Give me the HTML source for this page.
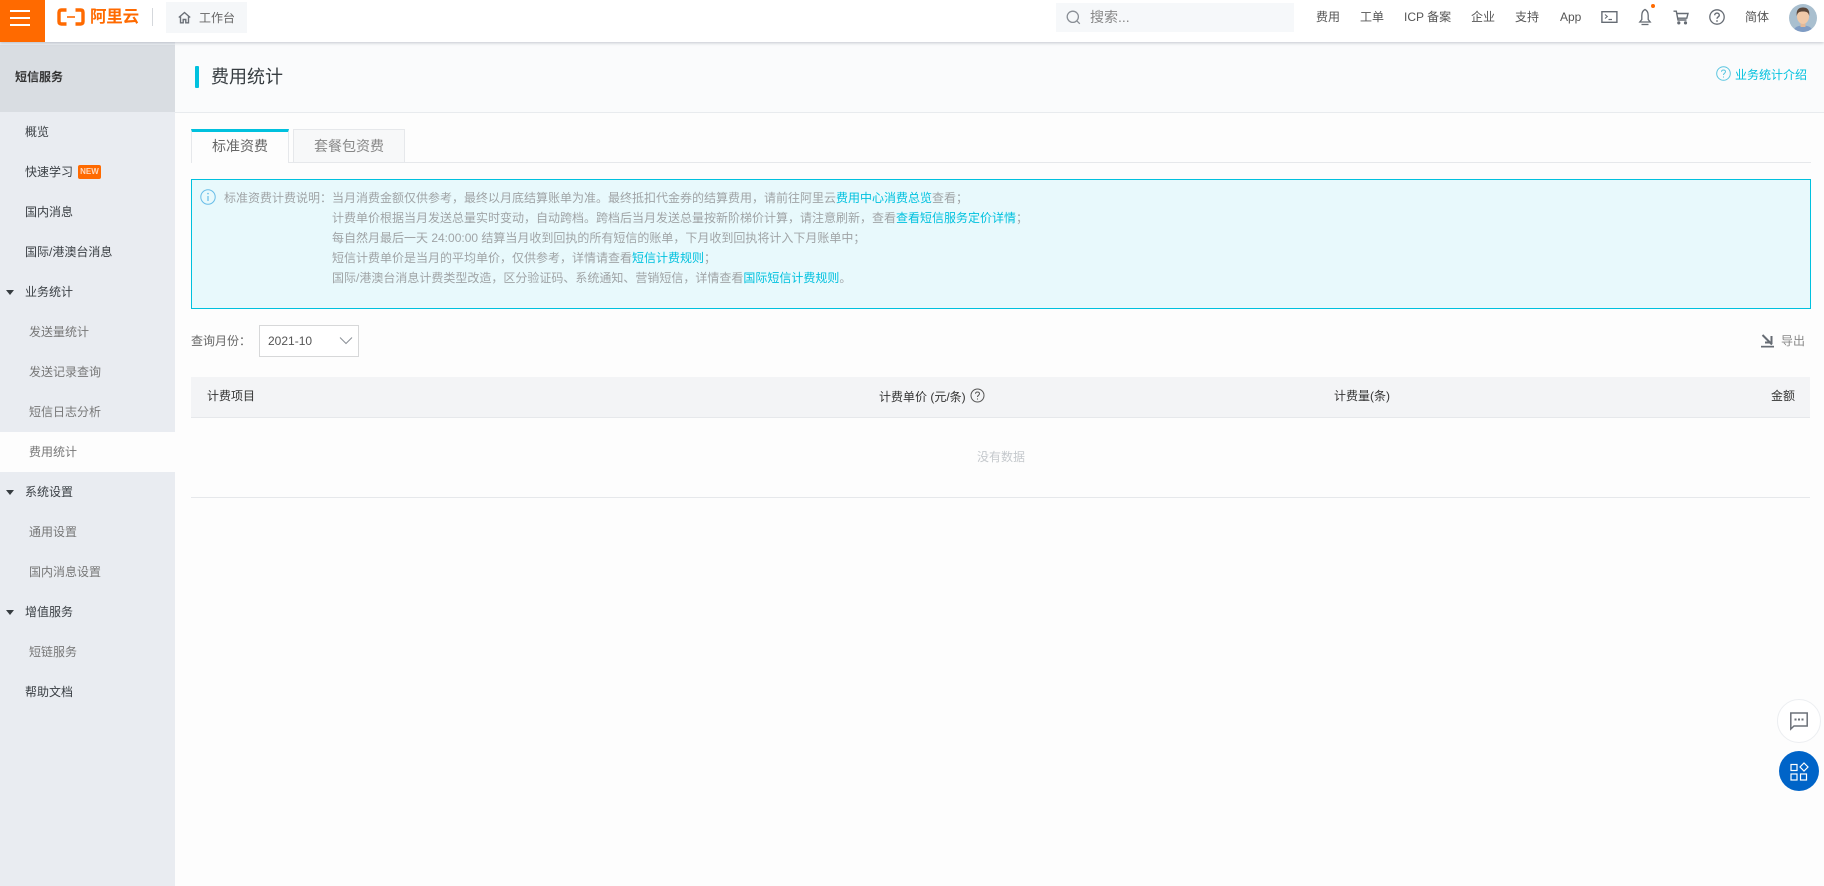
<!DOCTYPE html>
<html lang="zh-CN">
<head>
<meta charset="utf-8">
<title>费用统计</title>
<style>
*{margin:0;padding:0;box-sizing:border-box}
html,body{width:1824px;height:886px;overflow:hidden;background:#fdfdfd}
body{position:relative;font-family:"Liberation Sans","Noto Sans CJK SC",sans-serif;font-size:12px;color:#333}
.a{position:absolute;white-space:nowrap}
.t{position:absolute;white-space:nowrap;line-height:20px;height:20px}
svg{position:absolute;display:block}
#top{position:absolute;left:0;top:0;width:1824px;height:42px;background:#fff;box-shadow:0 1px 3px rgba(60,70,90,.28);z-index:5}
#side{position:absolute;left:0;top:42px;width:175px;height:844px;background:#e9ecf1}
#sidehead{position:absolute;left:0;top:3px;width:175px;height:67px;background:#d9dde2}
.s1{left:25px;color:#3a3f44}
.s2{left:29px;color:#777}
.tri{position:absolute;left:6px;width:0;height:0;border-left:4px solid transparent;border-right:4px solid transparent;border-top:5px solid #373d41}
.nav{top:7px;color:#555}
.al{color:#a0a4a6}
.al b{font-weight:normal;color:#00c1de}
</style>
</head>
<body>

<div id="side">
  <div id="sidehead"></div>
  <div class="a" style="left:0;top:390px;width:175px;height:40px;background:#fdfdfd"></div>
</div>

<div class="t" style="left:15px;top:67px;font-weight:bold;color:#333">短信服务</div>
<div class="t s1" style="top:122px">概览</div>
<div class="t s1" style="top:162px">快速学习</div>
<div class="a" style="left:78px;top:165px;width:23px;height:14px;background:#ff6a00;border-radius:2px;color:#ffd9bd;font-size:8px;line-height:14px;text-align:center;font-weight:bold">NEW</div>
<div class="t s1" style="top:202px">国内消息</div>
<div class="t s1" style="top:242px">国际/港澳台消息</div>
<div class="tri" style="top:290px"></div>
<div class="t s1" style="top:282px">业务统计</div>
<div class="t s2" style="top:322px">发送量统计</div>
<div class="t s2" style="top:362px">发送记录查询</div>
<div class="t s2" style="top:402px">短信日志分析</div>
<div class="t s2" style="top:442px">费用统计</div>
<div class="tri" style="top:490px"></div>
<div class="t s1" style="top:482px">系统设置</div>
<div class="t s2" style="top:522px">通用设置</div>
<div class="t s2" style="top:562px">国内消息设置</div>
<div class="tri" style="top:610px"></div>
<div class="t s1" style="top:602px">增值服务</div>
<div class="t s2" style="top:642px">短链服务</div>
<div class="t s1" style="top:682px">帮助文档</div>

<div id="top">
  <div class="a" style="left:0;top:0;width:45px;height:42px;background:#ff6a00"></div>
  <div class="a" style="left:10px;top:10px;width:20px;height:2px;background:#fff"></div>
  <div class="a" style="left:10px;top:17px;width:20px;height:2px;background:#fff"></div>
  <div class="a" style="left:10px;top:24px;width:20px;height:2px;background:#fff"></div>

  <svg style="left:57px;top:8px" width="28" height="18" viewBox="0 0 28 18" fill="none" stroke="#ff6a00">
    <path d="M9.500 2H4.500Q2 2 2 4.500V13.500Q2 16 4.500 16H9.500" stroke-width="3.400"/>
    <path d="M18.500 2H23.500Q26 2 26 4.500V13.500Q26 16 23.500 16H18.500" stroke-width="3.400"/>
    <path d="M10 9H18" stroke-width="1.600"/>
  </svg>
  <div class="a" style="left:90px;top:5px;font-size:16.500px;line-height:24px;color:#ff6a00;font-weight:bold;letter-spacing:-.2px">阿里云</div>
  <div class="a" style="left:152px;top:8px;width:1px;height:18px;background:#d5d8dc"></div>

  <div class="a" style="left:166px;top:2px;width:81px;height:31px;background:#f5f7f9"></div>
  <svg style="left:178px;top:11px" width="13" height="13" viewBox="0 0 13 13" fill="none" stroke="#6b7078" stroke-width="1.400">
    <path d="M.8 6.500 6.500 1.500 12.200 6.500"/>
    <path d="M2.500 5.500V11.800H5.200V8.500H7.800V11.800H10.500V5.500"/>
  </svg>
  <div class="t" style="left:199px;top:8px;color:#666">工作台</div>

  <div class="a" style="left:1056px;top:3px;width:238px;height:29px;background:#f6f8fa"></div>
  <svg style="left:1066px;top:10px" width="15" height="15" viewBox="0 0 15 15" fill="none" stroke="#8a8f96" stroke-width="1.300">
    <circle cx="6.800" cy="6.800" r="5.600"/><path d="M10.800 10.800 13.800 13.800"/>
  </svg>
  <div class="t" style="left:1090px;top:7px;font-size:14px;color:#888">搜索...</div>

  <div class="t nav" style="left:1316px">费用</div>
  <div class="t nav" style="left:1360px">工单</div>
  <div class="t nav" style="left:1404px">ICP 备案</div>
  <div class="t nav" style="left:1471px">企业</div>
  <div class="t nav" style="left:1515px">支持</div>
  <div class="t nav" style="left:1560px">App</div>

  <svg style="left:1601px;top:10px" width="17" height="14" viewBox="0 0 17 14" fill="none" stroke="#666c74" stroke-width="1.400">
    <rect x=".9" y="1.700" width="15" height="10.600"/>
    <path d="M4 4.500 6.300 6.500 4 8.500" stroke-width="1.100"/>
    <path d="M7.500 9.500H11" stroke-width="1.200"/>
  </svg>
  <svg style="left:1638px;top:8px" width="14" height="18" viewBox="0 0 14 18" fill="none" stroke="#666c74" stroke-width="1.300">
    <path d="M7 1.500C4.300 2.800 3.800 5 3.800 7.500V11.500L1.800 14H12.200L10.200 11.500V7.500C10.200 5 9.700 2.800 7 1.500Z"/>
    <path d="M3.500 16.500H10.500"/>
  </svg>
  <div class="a" style="left:1651px;top:4px;width:4px;height:4px;border-radius:50%;background:#ff6a00"></div>
  <svg style="left:1673px;top:10px" width="16" height="15" viewBox="0 0 16 15" fill="none" stroke="#666c74" stroke-width="1.400">
    <path d="M.5 1.200H3.300L5 10H13.500"/>
    <path d="M3.800 3.500H15L13.800 8.200H4.800"/>
    <circle cx="5.800" cy="12.900" r=".9" fill="#666c74"/><circle cx="12.500" cy="12.900" r=".9" fill="#666c74"/>
  </svg>
  <svg style="left:1709px;top:9px" width="16" height="16" viewBox="0 0 16 16" fill="none" stroke="#666c74" stroke-width="1.300">
    <circle cx="8" cy="8" r="7.200"/>
    <path d="M5.700 6.200C5.700 3.400 10.300 3.400 10.300 6.200 10.300 7.800 8 7.800 8 9.800" stroke-width="1.400"/>
    <circle cx="8" cy="12" r=".9" fill="#666c74" stroke="none"/>
  </svg>
  <div class="t nav" style="left:1745px">简体</div>

  <svg style="left:1789px;top:4px" width="28" height="28" viewBox="0 0 28 28">
    <defs><clipPath id="av"><circle cx="14" cy="14" r="14"/></clipPath></defs>
    <g clip-path="url(#av)">
      <rect width="28" height="28" fill="#a9bfcf"/>
      <path d="M4 28C5 23 9 21.500 14 21.500S23 23 24 28Z" fill="#7f9cc4"/>
      <rect x="11.500" y="17" width="5" height="6" fill="#e3b998"/>
      <ellipse cx="14" cy="12.500" rx="6" ry="7.500" fill="#f0c9a8"/>
      <path d="M7.800 12C7 5.500 10 3.500 14 3.500S21 5.500 20.200 12C19.500 8.500 18 7.500 14 7.500S8.500 8.500 7.800 12Z" fill="#5a4639"/>
    </g>
  </svg>
</div>

<div class="a" style="left:175px;top:42px;width:1649px;height:70px;background:#fafbfc"></div>
<div class="a" style="left:175px;top:112px;width:1649px;height:1px;background:#e8ebee"></div>
<div class="a" style="left:195px;top:66px;width:4px;height:22px;background:#00c1de;border-radius:1px"></div>
<div class="a" style="left:211px;top:63px;font-size:18px;line-height:28px;color:#373d41">费用统计</div>

<svg style="left:1716px;top:66px" width="15" height="15" viewBox="0 0 15 15" fill="none" stroke="#5cc6e0" stroke-width="1">
  <circle cx="7.500" cy="7.500" r="6.800"/>
  <path d="M5.500 5.800C5.500 3.400 9.500 3.400 9.500 5.800 9.500 7.200 7.500 7.200 7.500 9"/>
  <circle cx="7.500" cy="11" r=".6" fill="#5cc6e0" stroke="none"/>
</svg>
<div class="t" style="left:1735px;top:65px;color:#00c1de">业务统计介绍</div>

<div class="a" style="left:191px;top:162px;width:1620px;height:1px;background:#e6e8eb"></div>
<div class="a" style="left:191px;top:129px;width:98px;height:34px;background:#fdfdfd;border-top:3px solid #00c1de;border-left:1px solid #e6e8eb;border-right:1px solid #e6e8eb"></div>
<div class="a" style="left:191px;top:133px;width:98px;text-align:center;font-size:14px;line-height:26px;color:#666">标准资费</div>
<div class="a" style="left:293px;top:129px;width:112px;height:34px;background:#f7f8f9;border:1px solid #e6e8eb"></div>
<div class="a" style="left:293px;top:133px;width:112px;text-align:center;font-size:14px;line-height:26px;color:#888">套餐包资费</div>

<div class="a" style="left:191px;top:179px;width:1620px;height:130px;background:#e8f9fc;border:1px solid #00c1de"></div>
<svg style="left:200px;top:189px" width="16" height="16" viewBox="0 0 16 16" fill="none" stroke="#67bde8" stroke-width="1">
  <circle cx="8" cy="8" r="7.200"/>
  <path d="M8 7V12" stroke-width="1.200"/><circle cx="8" cy="4.600" r=".8" fill="#67bde8" stroke="none"/>
</svg>
<div class="t al" style="left:224px;top:188px">标准资费计费说明：</div>
<div class="t al" style="left:332px;top:188px">当月消费金额仅供参考，最终以月底结算账单为准。最终抵扣代金券的结算费用，请前往阿里云<b>费用中心消费总览</b>查看；</div>
<div class="t al" style="left:332px;top:208px">计费单价根据当月发送总量实时变动，自动跨档。跨档后当月发送总量按新阶梯价计算，请注意刷新，查看<b>查看短信服务定价详情</b>；</div>
<div class="t al" style="left:332px;top:228px">每自然月最后一天 24:00:00 结算当月收到回执的所有短信的账单，下月收到回执将计入下月账单中；</div>
<div class="t al" style="left:332px;top:248px">短信计费单价是当月的平均单价，仅供参考，详情请查看<b>短信计费规则</b>；</div>
<div class="t al" style="left:332px;top:268px">国际/港澳台消息计费类型改造，区分验证码、系统通知、营销短信，详情查看<b>国际短信计费规则</b>。</div>

<div class="t" style="left:191px;top:331px;color:#666">查询月份：</div>
<div class="a" style="left:259px;top:325px;width:100px;height:32px;background:#fff;border:1px solid #d7d8d9"></div>
<div class="t" style="left:268px;top:331px;color:#555">2021-10</div>
<svg style="left:339px;top:336px" width="14" height="9" viewBox="0 0 14 9" fill="none" stroke="#8a8f96" stroke-width="1"><path d="M1 1.500 7 7.500 13 1.500"/></svg>

<svg style="left:1761px;top:334px" width="13" height="14" viewBox="0 0 13 14">
  <path d="M1.500 1 11 10.500M4 8.500H10.500V2" fill="none" stroke="#666c74" stroke-width="2"/>
  <path d="M0 11.800H13V13.500H0Z" fill="#666c74"/>
</svg>
<div class="t" style="left:1781px;top:331px;color:#888">导出</div>

<div class="a" style="left:191px;top:377px;width:1619px;height:40px;background:#f3f4f6"></div>
<div class="a" style="left:191px;top:417px;width:1619px;height:1px;background:#e6e8eb"></div>
<div class="t" style="left:207px;top:386px">计费项目</div>
<div class="t" style="left:879px;top:387px">计费单价 (元/条)</div>
<svg style="left:970px;top:388px" width="15" height="15" viewBox="0 0 15 15" fill="none" stroke="#555" stroke-width="1">
  <circle cx="7.500" cy="7.500" r="6.500"/>
  <path d="M5.500 5.800C5.500 3.400 9.500 3.400 9.500 5.800 9.500 7.200 7.500 7.200 7.500 9"/>
  <circle cx="7.500" cy="11" r=".6" fill="#555" stroke="none"/>
</svg>
<div class="t" style="left:1334px;top:386px">计费量(条)</div>
<div class="t" style="left:1771px;top:386px">金额</div>
<div class="t" style="left:977px;top:447px;color:#c4c8cc">没有数据</div>
<div class="a" style="left:191px;top:497px;width:1619px;height:1px;background:#e6e8eb"></div>

<div class="a" style="left:1777px;top:699px;width:44px;height:44px;border-radius:50%;background:#fff;border:1px solid #eceef1"></div>
<svg style="left:1789px;top:711px" width="20" height="20" viewBox="0 0 20 20">
  <path d="M1.800 2H18.200V15H5L1.800 18Z" fill="none" stroke="#6b7078" stroke-width="1.500"/>
  <rect x="5.500" y="7.500" width="2" height="2" fill="#6b7078"/><rect x="9" y="7.500" width="2" height="2" fill="#6b7078"/><rect x="12.500" y="7.500" width="2" height="2" fill="#6b7078"/>
</svg>
<div class="a" style="left:1779px;top:751px;width:40px;height:40px;border-radius:50%;background:#0064c8"></div>
<svg style="left:1790px;top:762px" width="19" height="19" viewBox="0 0 19 19" fill="none" stroke="#fff" stroke-width="1.200">
  <rect x="1" y="2.500" width="6" height="6"/>
  <path d="M14 1 18 5 14 9 10 5Z"/>
  <rect x="1" y="12" width="6" height="6"/>
  <rect x="10.500" y="12" width="6" height="6"/>
</svg>

</body>
</html>
